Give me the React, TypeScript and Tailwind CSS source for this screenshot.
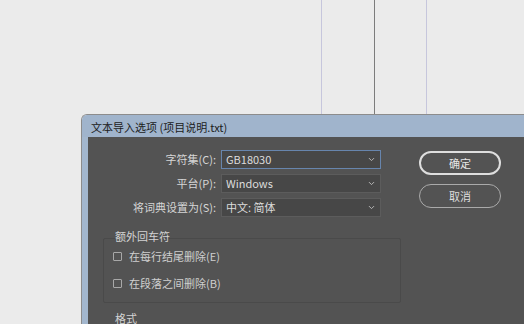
import { ChevronDown } from "lucide-react";

const font = { fontFamily: '"Noto Sans CJK SC", "Noto Sans", sans-serif' };

function Select({ value, focused }: { value: string; focused?: boolean }) {
  return (
    <div
      className={`flex h-[19px] w-[160px] items-center justify-between border bg-[#474747] pl-[4px] pr-[4px] text-[11px] leading-none text-[#dcdcdc] ${
        focused ? "border-[#6785ad]" : "border-[#5c5c5c]"
      }`}
    >
      <span>{value}</span>
      <ChevronDown className="h-[9px] w-[9px] text-[#bdbdbd]" strokeWidth={2.5} />
    </div>
  );
}

function Row({ label, value, focused }: { label: string; value: string; focused?: boolean }) {
  return (
    <div className="flex items-center">
      <div className="w-[129px] pr-[1px] text-right text-[11px] leading-none text-[#d6d6d6]">{label}</div>
      <div className="ml-[4px]">
        <Select value={value} focused={focused} />
      </div>
    </div>
  );
}

function Check({ label }: { label: string }) {
  return (
    <div className="flex items-center gap-[7px]">
      <div className="h-[9px] w-[9px] rounded-[1px] border border-[#a8a8a8]" />
      <span className="text-[11px] leading-none text-[#cfcfcf]">{label}</span>
    </div>
  );
}

export default function App() {
  return (
    <div className="h-[324px] w-[524px] overflow-hidden bg-[#ebebeb]" style={font}>
      {/* guide lines */}
      <div className="flex h-[114px]">
        <div className="ml-[321px] h-full w-px bg-[#c6c6dc]" />
        <div className="ml-[52px] h-full w-px bg-[#7c7c7c]" />
        <div className="ml-[51px] h-full w-px bg-[#c6c6dc]" />
      </div>

      {/* dialog */}
      <div className="ml-[81px] flex h-[210px] w-[460px] flex-col overflow-hidden rounded-tl-[6px] border-l border-t border-[#8c8c8c]">
        <div className="flex h-[26px] items-center bg-[#a0b4cc] pl-[9px] pt-[2px] text-[11px] text-[#1c1c1c]">
          文本导入选项 (项目说明.txt)
        </div>
        <div className="flex flex-1">
          <div className="w-[6px] bg-[#a3b7ce]" />
          <div className="flex-1 bg-[#535353] pt-[13px]">
            <div className="flex">
              <div className="flex flex-col gap-[5px]">
                <Row label="字符集(C):" value="GB18030" focused />
                <Row label="平台(P):" value="Windows" />
                <Row label="将词典设置为(S):" value="中文: 简体" />
              </div>
              <div className="ml-[38px] flex flex-col gap-[9px] pt-px">
                <button className="h-[24px] w-[82px] rounded-full border-2 border-[#dedede] text-[11px] text-[#e6e6e6]">
                  确定
                </button>
                <button className="h-[24px] w-[82px] rounded-full border-[1.5px] border-[#aaaaaa] text-[11px] text-[#dedede]">
                  取消
                </button>
              </div>
            </div>

            <div className="mt-[13px] ml-[15px] w-[298px]">
              <div className="relative z-10 ml-[12px] text-[11px] leading-[12px] text-[#d2d2d2]">额外回车符</div>
              <div className="-mt-[4px] flex h-[65px] flex-col gap-[16px] rounded-[2px] border border-[#4a4a4a] pl-[9px] pt-[12px]">
                <Check label="在每行结尾删除(E)" />
                <Check label="在段落之间删除(B)" />
              </div>
            </div>

            <div className="mt-[9px] ml-[27px] text-[11px] leading-[12px] text-[#d2d2d2]">格式</div>
          </div>
        </div>
      </div>
    </div>
  );
}
